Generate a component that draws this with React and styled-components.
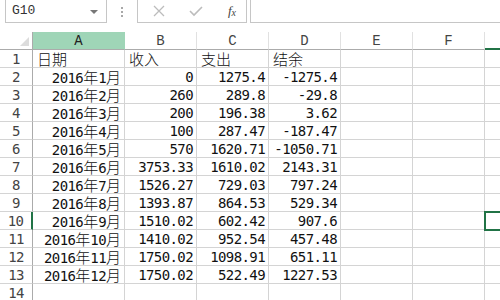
import React from 'react';
import styled, { createGlobalStyle } from 'styled-components';

const GlobalStyle = createGlobalStyle`
  body {
    margin: 0;
    background: #fff;
  }
`;

const COLS = ['A', 'B', 'C', 'D', 'E', 'F', 'G'];
const WIDTHS = [92, 72, 72, 72, 72, 72, 72];

const ROWS = [
  ['日期', '收入', '支出', '结余'],
  ['2016年1月', '0', '1275.4', '-1275.4'],
  ['2016年2月', '260', '289.8', '-29.8'],
  ['2016年3月', '200', '196.38', '3.62'],
  ['2016年4月', '100', '287.47', '-187.47'],
  ['2016年5月', '570', '1620.71', '-1050.71'],
  ['2016年6月', '3753.33', '1610.02', '2143.31'],
  ['2016年7月', '1526.27', '729.03', '797.24'],
  ['2016年8月', '1393.87', '864.53', '529.34'],
  ['2016年9月', '1510.02', '602.42', '907.6'],
  ['2016年10月', '1410.02', '952.54', '457.48'],
  ['2016年11月', '1750.02', '1098.91', '651.11'],
  ['2016年12月', '1750.02', '522.49', '1227.53'],
  [],
];

const SELECTED = { col: 6, row: 10 };

function renderText(text) {
  return text.split(/([\u4e00-\u9fff]+)/).map((part, i) =>
    /[\u4e00-\u9fff]/.test(part) ? <Han key={i}>{part}</Han> : part
  );
}

export default function App() {
  return (
    <>
      <GlobalStyle />
      <Window>
        <FormulaBar>
          <NameBox>
            G10
            <Caret />
          </NameBox>
          <Grip>
            <Dot />
            <Dot />
            <Dot />
          </Grip>
          <ButtonBox>
            <svg width="12" height="12" viewBox="0 0 12 12">
              <path d="M1 1 L11 11 M11 1 L1 11" stroke="#bcbcbc" strokeWidth="1.3" fill="none" />
            </svg>
            <svg width="14" height="12" viewBox="0 0 14 12">
              <path d="M1 6 L5 10 L13 2" stroke="#bcbcbc" strokeWidth="1.6" fill="none" />
            </svg>
            <Fx>
              f<sub>x</sub>
            </Fx>
          </ButtonBox>
          <FormulaInput />
        </FormulaBar>

        <Sheet $widths={WIDTHS}>
          <Corner>
            <Triangle />
          </Corner>
          {COLS.map((c, i) => (
            <ColHeader key={c} $active={i === 0} $selected={i === SELECTED.col}>
              {c}
            </ColHeader>
          ))}
          {ROWS.map((row, r) => (
            <React.Fragment key={r}>
              <RowHeader $selected={r + 1 === SELECTED.row}>{r + 1}</RowHeader>
              {COLS.map((c, ci) => {
                const value = row[ci] || '';
                const numeric = /^-?[\d.]+$/.test(value);
                const isDate = /^2016/.test(value);
                return (
                  <Cell
                    key={c}
                    $right={numeric || isDate}
                    $selected={ci === SELECTED.col && r + 1 === SELECTED.row}
                  >
                    {renderText(value)}
                  </Cell>
                );
              })}
            </React.Fragment>
          ))}
        </Sheet>
      </Window>
    </>
  );
}

const Window = styled.div`
  width: 500px;
  height: 300px;
  overflow: hidden;
  background: #fff;
  font-family: "DejaVu Sans Mono", "Liberation Mono", "Noto Sans CJK SC", monospace;
`;

const FormulaBar = styled.div`
  display: flex;
  height: 23px;
  margin-bottom: 9px;
`;

const NameBox = styled.div`
  box-sizing: border-box;
  width: 102px;
  margin-left: 5px;
  padding: 3px 0 0 6px;
  border: 1px solid #c6c6c6;
  border-top: none;
  font-family: "Liberation Mono", monospace;
  font-size: 13px;
  color: #333;
  display: flex;
  justify-content: space-between;
  align-items: flex-start;
`;

const Caret = styled.span`
  width: 0;
  height: 0;
  margin: 7px 8px 0 0;
  border-left: 4px solid transparent;
  border-right: 4px solid transparent;
  border-top: 4px solid #777;
`;

const Grip = styled.div`
  width: 30px;
  display: flex;
  flex-direction: column;
  align-items: center;
  gap: 2px;
  padding-top: 7px;
`;

const Dot = styled.span`
  width: 2px;
  height: 2px;
  background: #a8a8a8;
`;

const ButtonBox = styled.div`
  box-sizing: border-box;
  width: 110px;
  border: 1px solid #c6c6c6;
  border-top: none;
  display: flex;
  align-items: center;
  justify-content: space-between;
  padding: 0 10px 0 15px;
`;

const Fx = styled.span`
  font-family: "Liberation Serif", serif;
  font-style: italic;
  font-size: 13px;
  color: #444;
  sub {
    font-size: 10px;
    vertical-align: -1px;
  }
`;

const FormulaInput = styled.div`
  flex: 1;
  margin-left: 3px;
  border-left: 1px solid #c6c6c6;
  border-bottom: 1px solid #c6c6c6;
`;

const Sheet = styled.div`
  display: grid;
  grid-template-columns: 33px ${(p) => p.$widths.map((w) => `${w}px`).join(' ')};
  grid-template-rows: 18px;
  grid-auto-rows: 18px;
  width: max-content;
`;

const Corner = styled.div`
  box-sizing: border-box;
  border-right: 1px solid #ababab;
  border-bottom: 1px solid #ababab;
  display: flex;
  align-items: flex-end;
  justify-content: flex-end;
  padding: 0 3px 3px 0;
`;

const Triangle = styled.span`
  width: 0;
  height: 0;
  border-left: 9px solid transparent;
  border-bottom: 9px solid #dcdcdc;
`;

const ColHeader = styled.div`
  box-sizing: border-box;
  background: ${(p) => (p.$active ? '#9fd5b7' : '#fff')};
  border-right: 1px solid ${(p) => (p.$active ? '#9fd5b7' : '#e1e1e1')};
  border-bottom: ${(p) => (p.$selected ? '2px solid #217346' : '1px solid #ababab')};
  font-family: "Liberation Mono", monospace;
  font-size: 14px;
  color: ${(p) => (p.$active ? '#222' : '#444')};
  text-align: center;
  line-height: 18px;
`;

const RowHeader = styled.div`
  box-sizing: border-box;
  border-right: ${(p) => (p.$selected ? '2px solid #217346' : '1px solid #ababab')};
  border-bottom: 1px solid #d4d4d4;
  font-size: 14px;
  letter-spacing: -0.6px;
  color: #444;
  text-align: center;
  line-height: 18px;
`;

const Cell = styled.div`
  box-sizing: border-box;
  border-right: 1px solid #d4d4d4;
  border-bottom: 1px solid #d4d4d4;
  padding: 0 3px 0 4px;
  font-size: 14px;
  letter-spacing: -0.6px;
  color: #111;
  white-space: nowrap;
  line-height: 18px;
  text-align: ${(p) => (p.$right ? 'right' : 'left')};
  ${(p) =>
    p.$selected &&
    `
    position: relative;
    z-index: 1;
    outline: 2px solid #217346;
    outline-offset: -1px;
  `}
`;

const Han = styled.span`
  font-family: "Noto Sans CJK SC", sans-serif;
  font-size: 15px;
  letter-spacing: 0;
  font-weight: 300;
  line-height: 18px;
`;
